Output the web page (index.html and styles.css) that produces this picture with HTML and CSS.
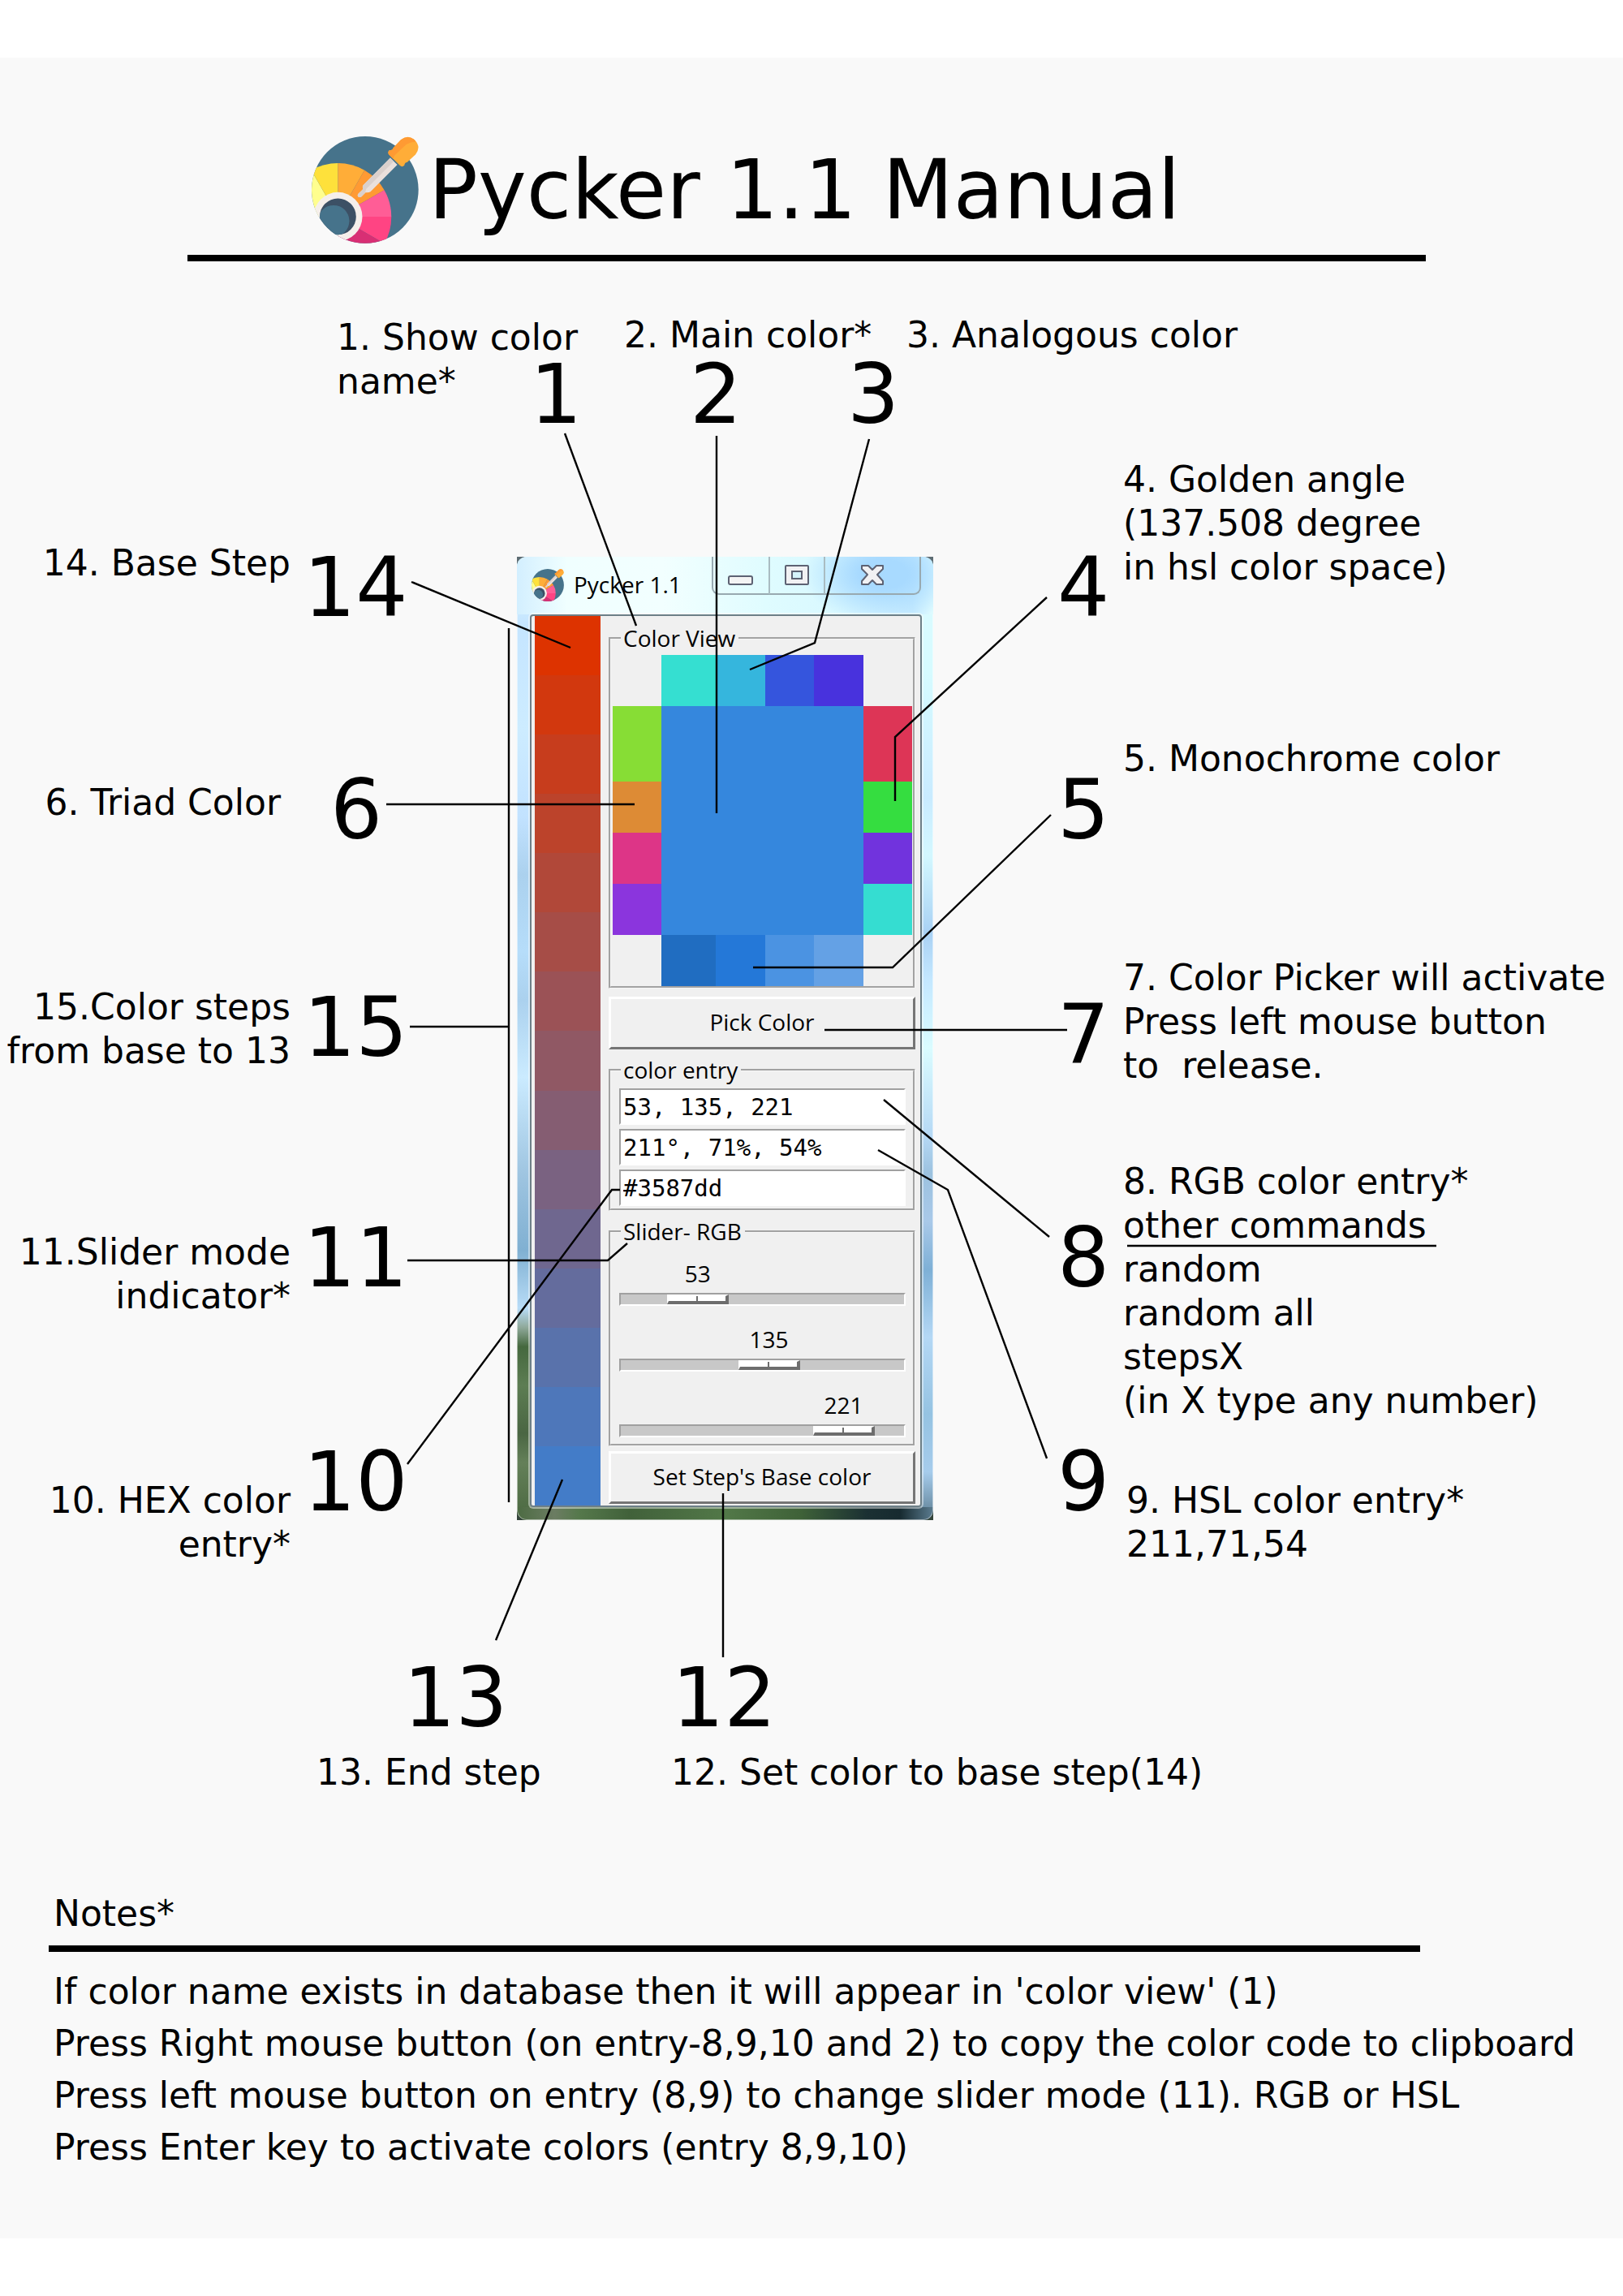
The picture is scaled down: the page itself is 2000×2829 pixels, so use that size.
FILE: index.html
```html
<!DOCTYPE html>
<html lang="en">
<head>
<meta charset="utf-8">
<title>Pycker 1.1 Manual</title>
<link rel="stylesheet" href="styles.css">
</head>
<body>
<svg class="defs" width="0" height="0" aria-hidden="true">
  <defs>
    <clipPath id="disc"><circle cx="238" cy="252" r="197"/></clipPath>
    <clipPath id="hub"><circle cx="138" cy="351" r="67"/></clipPath>
    <symbol id="logo" viewBox="41 55 395 395">
      <circle cx="238" cy="252" r="197" fill="#46738b"/>
      <g clip-path="url(#disc)">
        <path d="M138 351L-59 351A197 197 0 0 1 40 180Z" fill="#fffe8f"/>
        <path d="M138 351L40 180A197 197 0 0 1 138 154Z" fill="#fee13b"/>
        <path d="M138 351L138 154A197 197 0 0 1 236 180Z" fill="#ffad38"/>
        <path d="M138 351L236 180A197 197 0 0 1 309 253Z" fill="#ff9a33"/>
        <path d="M138 351L309 253A197 197 0 0 1 335 351Z" fill="#ff5d96"/>
        <path d="M138 351L335 351A197 197 0 0 1 309 450Z" fill="#ff4483"/>
        <path d="M138 351L309 450A197 197 0 0 1 138 548Z" fill="#d82f74"/>
        <circle cx="138" cy="351" r="90" fill="#f5efeb"/>
        <circle cx="138" cy="351" r="67" fill="#3c5065"/>
        <circle cx="122" cy="367" r="58" fill="#46738b" clip-path="url(#hub)"/>
      </g>
      <path d="M331 134L231 235Q227 240 230 250L213 267Q208 273 213 278Q219 282 225 277L240 262Q252 263 258 259L357 160Z" fill="#eae0dc"/>
      <path d="M331 134L231 235Q227 240 230 250L213 267Q208 273 213 278Q219 282 225 277L237 265Q244 246 241 250L344 147Z" fill="#dad0cc"/>
      <path d="M342 98L370 68Q396 46 422 69Q446 95 424 122L393 151Q384 152 383 162Q375 170 367 163L326 122Q320 114 328 106Q340 108 342 98Z" fill="#ffad38"/>
      <path d="M342 98L370 68Q396 48 420 68Q424 72 424 75Q398 76 381 93L347 125Q341 133 344 140L326 122Q320 114 328 106Q340 108 342 98Z" fill="#ff9a33"/>
    </symbol>
  </defs>
</svg>

<main class="sheet">
  <header class="masthead">
    <div class="brand">
      <svg class="brand-logo" aria-hidden="true"><use href="#logo"/></svg>
      <h1>Pycker 1.1 Manual</h1>
    </div>
    <hr class="rule">
  </header>

  <section class="diagram">
    <div class="frame">
      <div class="window">
        <div class="titlebar">
          <svg class="app-icon" aria-hidden="true"><use href="#logo"/></svg>
          <span class="app-name">Pycker 1.1</span>
          <div class="controls">
            <button type="button" class="control" aria-label="Minimize">
              <svg width="32" height="46" viewBox="0 0 32 46"><rect x="1" y="24" width="29" height="10" rx="2" fill="#f4f4f4" stroke="#5d6273" stroke-width="2"/></svg>
            </button>
            <button type="button" class="control" aria-label="Maximize">
              <svg width="32" height="46" viewBox="0 0 32 46"><rect x="2" y="11" width="28" height="23" rx="1" fill="#f1f1f3" stroke="#5d6273" stroke-width="2"/><rect x="10" y="18" width="12" height="9" fill="#d5f3fb" stroke="#5d6273" stroke-width="2"/></svg>
            </button>
            <button type="button" class="control control-close" aria-label="Close">
              <svg width="32" height="46" viewBox="0 0 32 46"><path d="M3 11H11L16 16L21 11H29V15L22 22L29 30V34H21L16 29L11 34H3V30L10 22L3 15Z" fill="#f1f1f3" stroke="#5d6273" stroke-width="2" stroke-linejoin="round"/></svg>
            </button>
          </div>
        </div>
        <div class="client">
          <div class="steps">
            <i class="step-0"></i><i class="step-1"></i><i class="step-2"></i><i class="step-3"></i><i class="step-4"></i><i class="step-5"></i><i class="step-6"></i><i class="step-7"></i><i class="step-8"></i><i class="step-9"></i><i class="step-10"></i><i class="step-11"></i><i class="step-12"></i><i class="step-13"></i><i class="step-14"></i>
          </div>
          <form class="panel">
            <fieldset class="group view">
              <legend>Color View</legend>
              <div class="swatches">
                <i class="analogous-1"></i><i class="analogous-2"></i><i class="analogous-3"></i><i class="analogous-4"></i>
                <i class="triad-1"></i><i class="main-color"></i><i class="golden-1"></i>
                <i class="triad-2"></i><i class="golden-2"></i>
                <i class="triad-3"></i><i class="golden-3"></i>
                <i class="triad-4"></i><i class="golden-4"></i>
                <i class="mono-1"></i><i class="mono-2"></i><i class="mono-3"></i><i class="mono-4"></i>
              </div>
            </fieldset>
            <button type="button" class="push">Pick Color</button>
            <fieldset class="group entries">
              <legend>color entry</legend>
              <input class="entry" type="text" aria-label="RGB" value="53, 135, 221">
              <input class="entry" type="text" aria-label="HSL" value="211°, 71%, 54%">
              <input class="entry" type="text" aria-label="HEX" value="#3587dd">
            </fieldset>
            <fieldset class="group sliders">
              <legend>Slider- RGB</legend>
              <div class="slider" style="--value:53"><label for="red">53</label><input id="red" type="range" min="0" max="255" value="53"></div>
              <div class="slider" style="--value:135"><label for="green">135</label><input id="green" type="range" min="0" max="255" value="135"></div>
              <div class="slider" style="--value:221"><label for="blue">221</label><input id="blue" type="range" min="0" max="255" value="221"></div>
            </fieldset>
            <button type="button" class="push push-base">Set Step's Base color</button>
          </form>
        </div>
      </div>
    </div>

    <svg class="leaders" viewBox="0 0 2000 1900" aria-hidden="true">
      <path d="M696 212L784 449"/>
      <path d="M883 215V680"/>
      <path d="M1071 219L1004 470L924 503"/>
      <path d="M1290 414L1103 586V665"/>
      <path d="M1295 682L1100 870H928"/>
      <path d="M476 669H782"/>
      <path d="M1016 947H1315"/>
      <path d="M1089 1033L1293 1202"/>
      <path d="M1082 1095L1168 1144L1290 1475"/>
      <path d="M502 1482L754 1144H764"/>
      <path d="M502 1231H749L773 1210"/>
      <path d="M891 1518V1720"/>
      <path d="M693 1501L611 1699"/>
      <path d="M507 395L703 476"/>
      <path d="M505 943H627M627 452V1529"/>
      <path d="M1389 1213H1770"/>
    </svg>

    <span class="pin pin-1">1</span>
    <span class="pin pin-2">2</span>
    <span class="pin pin-3">3</span>
    <span class="pin pin-4">4</span>
    <span class="pin pin-5">5</span>
    <span class="pin pin-6">6</span>
    <span class="pin pin-7">7</span>
    <span class="pin pin-8">8</span>
    <span class="pin pin-9">9</span>
    <span class="pin pin-10">10</span>
    <span class="pin pin-11">11</span>
    <span class="pin pin-12">12</span>
    <span class="pin pin-13">13</span>
    <span class="pin pin-14">14</span>
    <span class="pin pin-15">15</span>

    <p class="note note-1">1. Show color<br>name*</p>
    <p class="note note-2">2. Main color*</p>
    <p class="note note-3">3. Analogous color</p>
    <p class="note note-4">4. Golden angle<br>(137.508 degree<br>in hsl color space)</p>
    <p class="note note-5">5. Monochrome color</p>
    <p class="note note-left note-6">6. Triad Color</p>
    <p class="note note-7">7. Color Picker will activate<br>Press left mouse button<br>to&nbsp; release.</p>
    <p class="note note-8">8. RGB color entry*<br>other commands<br>random<br>random all<br>stepsX<br>(in X type any number)</p>
    <p class="note note-9">9. HSL color entry*<br>211,71,54</p>
    <p class="note note-left note-10">10. HEX color<br>entry*</p>
    <p class="note note-left note-11">11.Slider mode<br>indicator*</p>
    <p class="note note-12">12. Set color to base step(14)</p>
    <p class="note note-13">13. End step</p>
    <p class="note note-left note-14">14. Base Step</p>
    <p class="note note-left note-15">15.Color steps<br>from base to 13</p>
  </section>

  <section class="footnotes">
    <h2>Notes*</h2>
    <hr class="rule">
    <ul>
      <li>If color name exists in database then it will appear in 'color view' (1)</li>
      <li>Press Right mouse button (on entry-8,9,10 and 2) to copy the color code to clipboard</li>
      <li>Press left mouse button on entry (8,9) to change slider mode (11). RGB or HSL</li>
      <li>Press Enter key to activate colors (entry 8,9,10)</li>
    </ul>
  </section>
</main>
</body>
</html>
```
FILE: styles.css
```css
* { box-sizing: border-box; }

body {
  margin: 0;
  background: #fff;
  color: #000;
  font-family: Verdana, "DejaVu Sans", sans-serif;
  font-size: 44px;
  line-height: 54px;
}

.defs { position: absolute; }

.sheet {
  margin: 71px 0 72px;
  padding-bottom: 80px;
  background: #f9f9f9;
  display: flow-root;
}

.rule {
  height: 8px;
  margin: 0;
  border: 0;
  background: #000;
}

/* Masthead */
.masthead { padding: 97px 243px 0 231px; }

.brand {
  display: flex;
  align-items: center;
  gap: 12px;
  padding-left: 153px;
  margin-bottom: 14px;
}

.brand-logo { width: 132px; height: 132px; flex: none; }

h1 {
  margin: 0;
  font-size: 101px;
  line-height: 100px;
  font-weight: 400;
  white-space: nowrap;
}

/* Annotated window */
.diagram {
  position: relative;
  padding: 364px 0 458px;
  overflow: hidden;
}

.leaders {
  position: absolute;
  top: 0;
  left: calc(50% - 1000px);
  width: 2000px;
  height: 1900px;
  fill: none;
  stroke: #000;
  stroke-width: 2.4;
  pointer-events: none;
}

.pin, .note { position: absolute; left: calc(50% + var(--x)); white-space: nowrap; margin: 0; }
.pin { font-size: 101px; line-height: 100px; }
.note-left { left: auto; right: calc(50% + 642px); text-align: right; }

.pin-1 { --x: -347px; top: 114px; }
.pin-2 { --x: -150px; top: 114px; }
.pin-3 { --x: 44px; top: 114px; }
.pin-4 { --x: 303px; top: 352px; }
.pin-5 { --x: 303px; top: 626px; }
.pin-7 { --x: 303px; top: 903px; }
.pin-8 { --x: 303px; top: 1178px; }
.pin-9 { --x: 303px; top: 1454px; }
.pin-14 { --x: -626px; top: 352px; }
.pin-6 { --x: -593px; top: 626px; }
.pin-15 { --x: -626px; top: 894px; }
.pin-11 { --x: -626px; top: 1178px; }
.pin-10 { --x: -626px; top: 1454px; }
.pin-13 { --x: -503px; top: 1720px; }
.pin-12 { --x: -172px; top: 1720px; }

.note-1 { --x: -585px; top: 67px; }
.note-2 { --x: -231px; top: 64px; }
.note-3 { --x: 117px; top: 64px; }
.note-4 { --x: 384px; top: 242px; }
.note-5 { --x: 384px; top: 586px; }
.note-7 { --x: 384px; top: 856px; }
.note-8 { --x: 384px; top: 1107px; }
.note-9 { --x: 388px; top: 1500px; }
.note-13 { --x: -610px; top: 1835px; }
.note-12 { --x: -173px; top: 1835px; }
.note-14 { top: 345px; }
.note-6 { top: 640px; right: calc(50% + 654px); }
.note-15 { top: 892px; }
.note-11 { top: 1194px; }
.note-10 { top: 1500px; }

/* Application window */
.frame {
  width: 513px;
  margin-left: calc(50% - 363px);
  background: linear-gradient(#5d6c73, #34443a);
}

.window {
  padding: 0 14px 16px 16px;
  border-radius: 12px;
  font-family: "Segoe UI", "Open Sans", sans-serif;
  font-size: 28px;
  line-height: 34px;
  background:
    linear-gradient(90deg, #4c6b42, #6b7c62 9%, #55784b 15%, #41613a 27%, #527848 50%, #3f6238 68%, #1b3033 84%, #172a30 92%, #5b7c90) 0 100% / 100% 16px no-repeat,
    linear-gradient(#e0fbff, #c5e5ff 7%, #cdecff 18%, #c2e2ff 27%, #abd1ee 33%, #b6ddfa 41%, #abd1ee 46%, #cbebff 54%, #9fc5e1 64%, #80b0d2 72%, #b8dcf7 78%, #8fa99a 80%, #45683e 82%, #5d7d53 86%, #4a6643 91%, #648059 94%, #4a6840) 0 0 / 50% 100% no-repeat,
    linear-gradient(#dcfbff, #d6fbff 12%, #c9ebff 25%, #d3f8ff 31%, #a9d1f4 39%, #c4e8ff 44%, #dafcff 51%, #b6d9f5 60%, #9cc2df 64%, #a9c9e9 69%, #7eb0d6 74%, #b4d8f5 81%, #95c3e2 89%, #a6ccec 95%, #5b7c90) 100% 0 / 50% 100% no-repeat;
  box-shadow: inset 0 0 0 1px rgba(255, 255, 255, .5);
}

.titlebar {
  display: flex;
  align-items: flex-start;
  height: 71px;
  margin: 0 -14px 0 -16px;
  padding: 0 15px 0 18px;
  border-radius: 12px 12px 0 0;
  background:
    radial-gradient(ellipse 100px 60px at 88% 30%, #a8daff 30%, rgba(168, 218, 255, 0)),
    linear-gradient(90deg, #d3efff, #f0ffff 12%, #f2ffff 35%, #dffcff 60%, #d8f8ff 78%, #c8ecff 95%, #e0fcff);
}

.app-icon { width: 40px; height: 40px; margin: 15px 12px 0 0; }
.app-name { margin-top: 17px; white-space: nowrap; }

.controls {
  display: grid;
  grid-template-columns: 70px 68px 1fr;
  width: 258px;
  height: 47px;
  margin-left: auto;
  border: 2px solid #98a9b0;
  border-top: 0;
  border-radius: 0 0 9px 9px;
}

.control {
  display: flex;
  justify-content: center;
  padding: 0;
  border: 0;
  border-right: 2px solid #a9bcc2;
  background: none;
}
.control-close { border-right: 0; }

.client {
  display: flex;
  gap: 10px;
  padding: 0 6px 0 4px;
  border: 2px solid #6d7f87;
  border-radius: 4px;
  background: #f0f0f0;
  box-shadow: 0 0 0 2px rgba(255, 255, 255, .45);
}

.steps { display: flex; flex-direction: column; width: 81px; }
.steps i { flex: 1; }
.step-0 { background: #dd3300; }
.step-1 { background: #d2380e; }
.step-2 { background: #c73d1d; }
.step-3 { background: #bc432b; }
.step-4 { background: #b14839; }
.step-5 { background: #a64d47; }
.step-6 { background: #9b5256; }
.step-7 { background: #905864; }
.step-8 { background: #855d72; }
.step-9 { background: #7a6281; }
.step-10 { background: #6f678f; }
.step-11 { background: #646c9d; }
.step-12 { background: #5972ab; }
.step-13 { background: #4e77ba; }
.step-14 { background: #437cc8; }

.panel { flex: 1; min-width: 0; padding: 10px 0 2px; }

.group {
  min-width: 0;
  margin: 0;
  border: 3px groove #f6f6f6;
}
.group legend { margin-left: 2px; padding: 0 4px 0 3px; }

.view { padding: 4px 1px 0 2px; }
.view legend { margin-left: 10px; }

.swatches {
  display: grid;
  grid-template-columns: 60fr 66fr 60fr 60fr 60fr 60fr;
  grid-template-rows: 63px 93px 63px 63px 63px 63px;
}
.analogous-1 { grid-column: 2; background: #35dfd1; }
.analogous-2 { background: #35b6dd; }
.analogous-3 { background: #3555dd; }
.analogous-4 { background: #4832dd; }
.main-color { grid-column: 2 / 6; grid-row: 2 / 6; background: #3587dd; }
.triad-1, .triad-2, .triad-3, .triad-4 { grid-column: 1; }
.triad-1 { grid-row: 2; background: #87dd35; }
.triad-2 { grid-row: 3; background: #dd8b35; }
.triad-3 { grid-row: 4; background: #dd3587; }
.triad-4 { grid-row: 5; background: #8b35dd; }
.golden-1, .golden-2, .golden-3, .golden-4 { grid-column: 6; }
.golden-1 { grid-row: 2; background: #dd3556; }
.golden-2 { grid-row: 3; background: #35dd40; }
.golden-3 { grid-row: 4; background: #7133dd; }
.golden-4 { grid-row: 5; background: #35ddd1; }
.mono-1 { grid-column: 2; background: #206dc1; }
.mono-2 { background: #2478d8; }
.mono-3 { background: #4b93e2; }
.mono-4 { background: #64a1e5; }

.push {
  display: block;
  width: 100%;
  height: 65px;
  margin: 10px 0 8px;
  padding: 0 0 4px;
  border: 3px solid;
  border-color: #fff #757575 #757575 #fff;
  background: #f0f0f0;
  color: #000;
  font: inherit;
}
.push-base { margin: 6px 0 0; }

.entries {
  display: grid;
  gap: 5px;
  margin-bottom: 8px;
  padding: 6px 9px 3px 10px;
}
.entry {
  width: 100%;
  height: 45px;
  padding: 0 3px;
  border: 2px solid;
  border-color: #a0a0a0 #fff #fff #a0a0a0;
  background: #fff;
  color: #000;
  font: 29px/40px Consolas, "DejaVu Sans Mono", monospace;
}

.sliders {
  display: grid;
  gap: 27px;
  padding: 21px 9px 8px 10px;
}
.slider { display: grid; gap: 10px; }
.slider label {
  width: 76px;
  margin-left: calc(2px + (100% - 80px) * var(--value) / 255);
  line-height: 28px;
  text-align: center;
}
.slider input {
  appearance: none;
  width: 100%;
  height: 16px;
  margin: 0;
  border: 2px solid;
  border-color: #a0a0a0 #fff #fff #a0a0a0;
  background: #c8c8c8;
}
.slider input::-webkit-slider-thumb {
  appearance: none;
  width: 76px;
  height: 12px;
  border: 2px solid;
  border-color: #fff #6d6d6d #6d6d6d #fff;
  border-width: 2px 4px 4px 2px;
  background: linear-gradient(#6d6d6d, #6d6d6d) 50% 50% / 2px 100% no-repeat #fff;
}

/* Notes */
.footnotes { padding-left: 60px; }
.footnotes h2 {
  margin: 0 0 12px 6px;
  font-size: 44px;
  font-weight: 400;
}
.footnotes .rule { width: calc(100% - 250px); }
.footnotes ul { margin: 17px 0 0 6px; padding: 0; list-style: none; }
.footnotes li { line-height: 64px; }
```
